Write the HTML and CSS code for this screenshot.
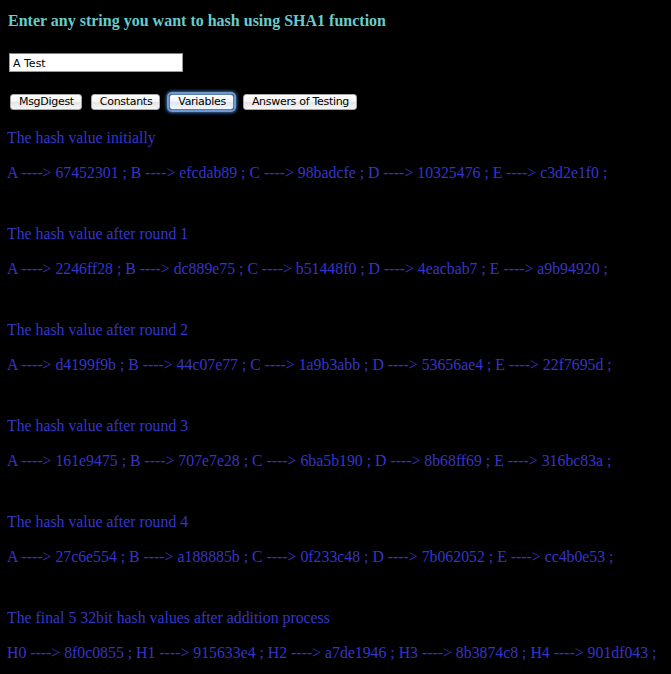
FILE: index.html
```html
<!DOCTYPE html>
<html>
<head>
<meta charset="utf-8">
<link rel="stylesheet" href="styles.css">
</head>
<body>
<h4 class="title">Enter any string you want to hash using SHA1 function</h4>
<div class="form">
  <input class="field" type="text" value="A Test">
  <div class="buttons">
    <button class="btn">MsgDigest</button>
    <button class="btn">Constants</button>
    <button class="btn focused">Variables</button>
    <button class="btn">Answers of Testing</button>
  </div>
</div>
<div class="results">
  <div class="block">
    <p class="head">The hash value initially</p>
    <p class="vals">A ----&gt; 67452301 ; B ----&gt; efcdab89 ; C ----&gt; 98badcfe ; D ----&gt; 10325476 ; E ----&gt; c3d2e1f0 ;</p>
  </div>
  <div class="block">
    <p class="head">The hash value after round 1</p>
    <p class="vals">A ----&gt; 2246ff28 ; B ----&gt; dc889e75 ; C ----&gt; b51448f0 ; D ----&gt; 4eacbab7 ; E ----&gt; a9b94920 ;</p>
  </div>
  <div class="block">
    <p class="head">The hash value after round 2</p>
    <p class="vals">A ----&gt; d4199f9b ; B ----&gt; 44c07e77 ; C ----&gt; 1a9b3abb ; D ----&gt; 53656ae4 ; E ----&gt; 22f7695d ;</p>
  </div>
  <div class="block">
    <p class="head">The hash value after round 3</p>
    <p class="vals">A ----&gt; 161e9475 ; B ----&gt; 707e7e28 ; C ----&gt; 6ba5b190 ; D ----&gt; 8b68ff69 ; E ----&gt; 316bc83a ;</p>
  </div>
  <div class="block">
    <p class="head">The hash value after round 4</p>
    <p class="vals">A ----&gt; 27c6e554 ; B ----&gt; a188885b ; C ----&gt; 0f233c48 ; D ----&gt; 7b062052 ; E ----&gt; cc4b0e53 ;</p>
  </div>
  <div class="block">
    <p class="head">The final 5 32bit hash values after addition process</p>
    <p class="vals">H0 ----&gt; 8f0c0855 ; H1 ----&gt; 915633e4 ; H2 ----&gt; a7de1946 ; H3 ----&gt; 8b3874c8 ; H4 ----&gt; 901df043 ;</p>
  </div>
</div>
</body>
</html>
```
FILE: styles.css
```css
html, body {
  background: #000;
}
body {
  margin: 0;
  padding: 12px 8px 0 7px;
  font-family: "Liberation Serif", "Times New Roman", serif;
  color: #3535cc;
}
.title {
  margin: 0;
  padding-left: 1px;
  font-size: 16px;
  line-height: 18px;
  font-weight: bold;
  color: #66cccc;
}
.form {
  display: flex;
  flex-direction: column;
  align-items: flex-start;
  padding: 23px 0 0 2px;
}
.field {
  box-sizing: border-box;
  width: 174px;
  height: 19px;
  margin: 0;
  padding: 1px 2px 0 3px;
  border: 1px solid #9a9a9a;
  border-top-color: #7d7d7d;
  background: #fff;
  font-family: "DejaVu Sans", sans-serif;
  font-size: 11px;
  color: #000;
  outline: none;
}
.buttons {
  display: flex;
  gap: 9px;
  margin-top: 22px;
  padding-left: 1px;
}
.btn {
  box-sizing: border-box;
  height: 16px;
  margin: 0;
  padding: 0 7px 0 8px;
  border: 1px solid #a8a8a8;
  border-radius: 3px;
  background: linear-gradient(#ffffff 0%, #f4f4f4 50%, #e4e4e4 51%, #f6f6f6 100%);
  font-family: "DejaVu Sans", sans-serif;
  font-size: 11px;
  letter-spacing: -0.3px;
  line-height: 14px;
  color: #000;
}
.btn.focused {
  border-color: #5a7fae;
  box-shadow: 0 0 0 2px #6e9ad0, 0 0 3px 3px #3d6aa8;
  background: linear-gradient(#ffffff 0%, #eef3fa 50%, #dde6f2 51%, #f3f6fb 100%);
}
.results {
  display: flex;
  flex-direction: column;
  padding-top: 19px;
  gap: 43px;
}
.block {
  display: flex;
  flex-direction: column;
  gap: 17px;
}
.head, .vals {
  margin: 0;
  font-size: 15.8px;
  line-height: 18px;
  white-space: nowrap;
}
```
